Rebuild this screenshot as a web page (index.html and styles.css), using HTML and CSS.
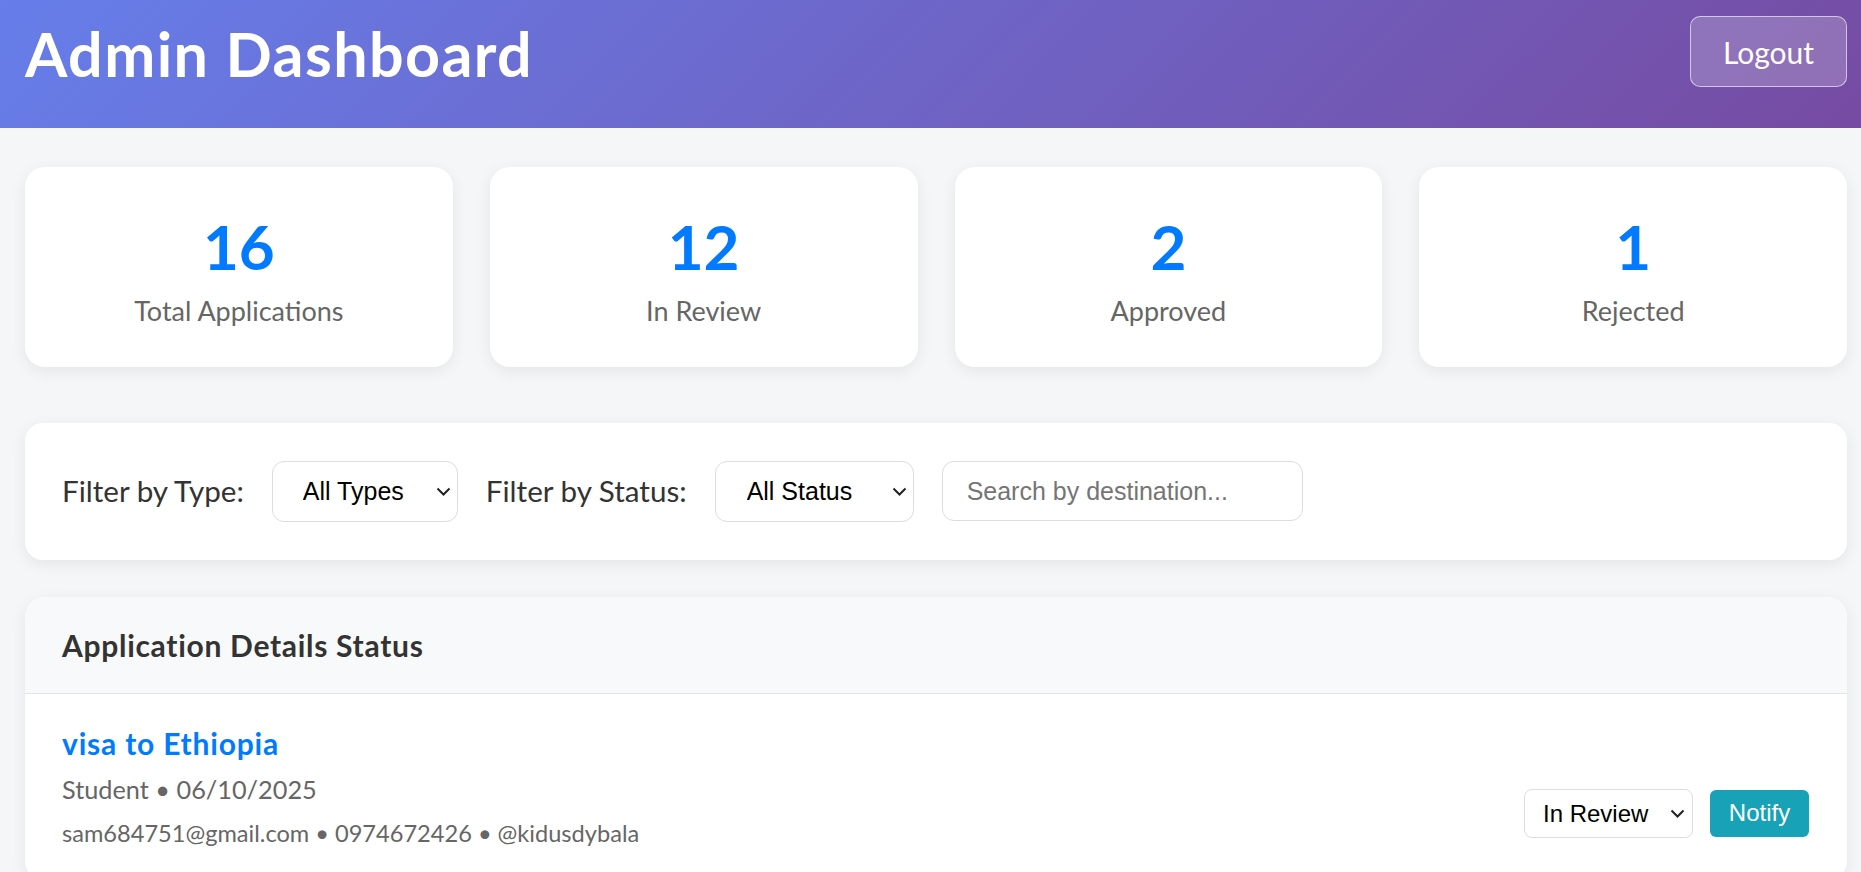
FILE: index.html
```html
<!DOCTYPE html>
<html lang="en">
<head>
<meta charset="utf-8">
<title>Admin Dashboard</title>
<link rel="stylesheet" href="styles.css">
</head>
<body>
<header class="topbar">
  <h1 class="title">Admin Dashboard</h1>
  <button class="logout" type="button">Logout</button>
</header>
<main class="content">
  <section class="stats">
    <div class="stat"><div class="stat-num">16</div><div class="stat-label">Total Applications</div></div>
    <div class="stat"><div class="stat-num">12</div><div class="stat-label">In Review</div></div>
    <div class="stat"><div class="stat-num">2</div><div class="stat-label">Approved</div></div>
    <div class="stat"><div class="stat-num">1</div><div class="stat-label">Rejected</div></div>
  </section>

  <section class="filters">
    <label class="filter-label">Filter by Type:</label>
    <div class="select-wrap type-wrap">
      <select class="filter-select"><option>All Types</option></select>
      <svg class="chev" width="15" height="9" viewBox="0 0 15 9"><polyline points="1.5,1.5 7.5,7.5 13.5,1.5" fill="none" stroke="#222" stroke-width="2"/></svg>
    </div>
    <label class="filter-label">Filter by Status:</label>
    <div class="select-wrap status-wrap">
      <select class="filter-select"><option>All Status</option></select>
      <svg class="chev" width="15" height="9" viewBox="0 0 15 9"><polyline points="1.5,1.5 7.5,7.5 13.5,1.5" fill="none" stroke="#222" stroke-width="2"/></svg>
    </div>
    <input class="search" type="text" placeholder="Search by destination...">
  </section>

  <section class="panel">
    <div class="panel-head"><h2 class="panel-title">Application Details Status</h2></div>
    <div class="app-item">
      <div class="app-info">
        <h3 class="app-title">visa to Ethiopia</h3>
        <div class="app-meta">Student • 06/10/2025</div>
        <div class="app-contact">sam684751@gmail.com • 0974672426 • @kidusdybala</div>
      </div>
      <div class="app-actions">
        <div class="select-wrap review-wrap">
          <select class="status-select"><option>In Review</option></select>
          <svg class="chev" width="15" height="9" viewBox="0 0 15 9"><polyline points="1.5,1.5 7.5,7.5 13.5,1.5" fill="none" stroke="#222" stroke-width="2"/></svg>
        </div>
        <button class="notify" type="button">Notify</button>
      </div>
    </div>
  </section>
</main>
</body>
</html>
```
FILE: styles.css
```css
* { box-sizing: border-box; }

html, body { overflow: hidden; }

body {
  margin: 0;
  background: #f5f6f8;
  font-family: "Lato", "Open Sans", sans-serif;
  color: #333;
}

.topbar {
  height: 128px;
  padding: 16px 14px 0 25px;
  display: flex;
  justify-content: space-between;
  align-items: flex-start;
  background: linear-gradient(135deg, #667eea 0%, #764ba2 100%);
  color: #fff;
}

.title {
  margin: 1px 0 0;
  font-size: 61px;
  line-height: 1.2;
  font-weight: 700;
  letter-spacing: 1.4px;
}

.logout {
  width: 157px;
  height: 71px;
  font-family: inherit;
  font-size: 30px;
  color: #fff;
  background: rgba(255, 255, 255, 0.2);
  border: 1px solid rgba(255, 255, 255, 0.6);
  border-radius: 10px;
  padding: 0;
}

.content {
  padding: 39px 14px 0 25px;
}

.stats {
  display: grid;
  grid-template-columns: repeat(4, 1fr);
  gap: 37px;
  margin-bottom: 56px;
}

.stat {
  background: #fff;
  border-radius: 20px;
  box-shadow: 0 4px 16px rgba(0, 0, 0, 0.07);
  padding: 42px 20px 35px;
  text-align: center;
}

.stat-num {
  font-size: 62px;
  line-height: 1.2;
  font-weight: 700;
  color: #007bff;
}

.stat-label {
  margin-top: 8px;
  font-size: 27px;
  line-height: 1.5;
  color: #666;
}

.filters {
  display: flex;
  align-items: center;
  gap: 28px;
  padding: 38px 37px;
  background: #fff;
  border-radius: 18px;
  box-shadow: 0 4px 16px rgba(0, 0, 0, 0.07);
  margin-bottom: 37px;
}

.filter-label {
  font-size: 29.6px;
  line-height: 1.5;
  color: #333;
}

.select-wrap {
  position: relative;
}

.type-wrap { width: 186px; }
.status-wrap { width: 199px; }
.review-wrap { width: 169px; }

.select-wrap select {
  -webkit-appearance: none;
  appearance: none;
  width: 100%;
  background: #fff;
  color: #000;
  font-family: "Liberation Sans", Arial, sans-serif;
  border: 1px solid #ddd;
  margin: 0;
  display: block;
}

.filter-select {
  height: 61px;
  font-size: 25px;
  padding: 0 30px;
  border-radius: 12px;
}

.status-wrap .filter-select { padding-left: 31px; }

.chev {
  position: absolute;
  right: 7px;
  top: 50%;
  margin-top: -4px;
}

.search {
  width: 361px;
  height: 60px;
  padding: 0 24px;
  font-family: "Liberation Sans", Arial, sans-serif;
  font-size: 25px;
  border: 1px solid #ddd;
  border-radius: 12px;
  color: #000;
  margin: 0;
}

.search::placeholder { color: #757575; }

.panel {
  background: #fff;
  border-radius: 20px;
  overflow: hidden;
  box-shadow: 0 4px 16px rgba(0, 0, 0, 0.07);
}

.panel-head {
  background: #f8f9fa;
  padding: 30px 37px;
  border-bottom: 1px solid #e1e4e8;
}

.panel-title {
  margin: 0;
  font-size: 30px;
  line-height: 1.2;
  font-weight: 700;
  letter-spacing: 0.7px;
  color: #333;
}

.app-item {
  display: flex;
  justify-content: space-between;
  align-items: flex-start;
  padding: 31px 38px 30px 37px;
}

.app-title {
  margin: 0 0 10px;
  font-size: 30px;
  line-height: 1.2;
  font-weight: 700;
  letter-spacing: 0.8px;
  color: #007bff;
}

.app-meta {
  font-size: 25.3px;
  line-height: 1.5;
  color: #666;
  margin-bottom: 7px;
}

.app-contact {
  font-size: 23.6px;
  line-height: 1.5;
  color: #666;
}

.app-actions {
  display: flex;
  align-items: center;
  gap: 17px;
  margin-top: 64px;
}

.status-select {
  height: 49px;
  font-size: 24px;
  padding: 0 18px;
  border-radius: 8px;
}

.review-wrap .chev { right: 8px; }

.notify {
  width: 99px;
  height: 47px;
  padding: 0;
  border: none;
  border-radius: 6px;
  background: #17a2b8;
  color: #fff;
  font-family: "Liberation Sans", Arial, sans-serif;
  font-size: 24px;
}
```
